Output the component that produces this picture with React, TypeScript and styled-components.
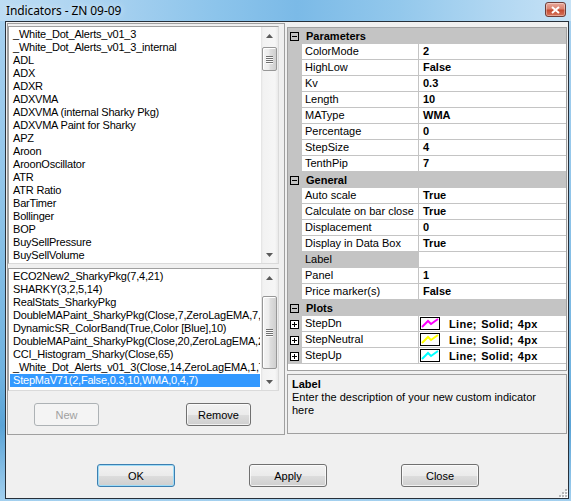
import * as React from 'react';
import styled, {createGlobalStyle} from 'styled-components';

const GlobalStyle = createGlobalStyle`
  html, body {
    margin: 0;
    padding: 0;
    background: #fff;
  }
  body {
    font-family: 'Liberation Sans', Arial, sans-serif;
    font-size: 11px;
    color: #000;
  }
  * {
    box-sizing: border-box;
  }
`;

const indicators = [
  '_White_Dot_Alerts_v01_3',
  '_White_Dot_Alerts_v01_3_internal',
  'ADL',
  'ADX',
  'ADXR',
  'ADXVMA',
  'ADXVMA (internal Sharky Pkg)',
  'ADXVMA Paint for Sharky',
  'APZ',
  'Aroon',
  'AroonOscillator',
  'ATR',
  'ATR Ratio',
  'BarTimer',
  'Bollinger',
  'BOP',
  'BuySellPressure',
  'BuySellVolume',
  'CCI',
  'ChaikinMoneyFlow',
];

const applied = [
  'ECO2New2_SharkyPkg(7,4,21)',
  'SHARKY(3,2,5,14)',
  'RealStats_SharkyPkg',
  'DoubleMAPaint_SharkyPkg(Close,7,ZeroLagEMA,7,ZeroLagEMA,21)',
  'DynamicSR_ColorBand(True,Color [Blue],10)',
  'DoubleMAPaint_SharkyPkg(Close,20,ZeroLagEMA,20,ZeroLagEMA,50)',
  'CCI_Histogram_Sharky(Close,65)',
  '_White_Dot_Alerts_v01_3(Close,14,ZeroLagEMA,1,True)',
  'StepMaV71(2,False,0.3,10,WMA,0,4,7)',
];

type Prop = {name: string; value: string; selected?: boolean};

const parameters: Prop[] = [
  {name: 'ColorMode', value: '2'},
  {name: 'HighLow', value: 'False'},
  {name: 'Kv', value: '0.3'},
  {name: 'Length', value: '10'},
  {name: 'MAType', value: 'WMA'},
  {name: 'Percentage', value: '0'},
  {name: 'StepSize', value: '4'},
  {name: 'TenthPip', value: '7'},
];

const general: Prop[] = [
  {name: 'Auto scale', value: 'True'},
  {name: 'Calculate on bar close', value: 'True'},
  {name: 'Displacement', value: '0'},
  {name: 'Display in Data Box', value: 'True'},
  {name: 'Label', value: '', selected: true},
  {name: 'Panel', value: '1'},
  {name: 'Price marker(s)', value: 'False'},
];

const plots = [
  {name: 'StepDn', color: '#ff00ff'},
  {name: 'StepNeutral', color: '#ffff00'},
  {name: 'StepUp', color: '#00ffff'},
];

const App = () => {
  return (
    <>
      <GlobalStyle />
      <Window>
        <TitleBar>
          <Title>Indicators - ZN 09-09</Title>
          <CloseButton>
            <svg width="9" height="8" viewBox="0 0 9 8">
              <path d="M1 1 L8 7 M8 1 L1 7" stroke="#fff" strokeWidth="2" />
            </svg>
          </CloseButton>
        </TitleBar>
        <Client>
          <Main>
            <LeftPanel>
              <ListBox height={238}>
                <ListItems>
                  {indicators.map((item) => (
                    <ListRow key={item}>{item}</ListRow>
                  ))}
                </ListItems>
                <ScrollBar thumbOffset={3} thumbHeight={24} />
              </ListBox>
              <ListBox height={123} gap={4}>
                <ListItems>
                  {applied.map((item, i) => (
                    <ListRow key={item} selected={i === applied.length - 1}>
                      {item}
                    </ListRow>
                  ))}
                </ListItems>
                <ScrollBar thumbOffset={10} thumbHeight={73} />
              </ListBox>
              <PanelButtons>
                <Button width={65} disabled>
                  New
                </Button>
                <Button width={65}>Remove</Button>
              </PanelButtons>
            </LeftPanel>
            <RightPanel>
              <Grid>
                <Category title="Parameters" />
                {parameters.map((p) => (
                  <PropRow key={p.name} {...p} />
                ))}
                <Category title="General" />
                {general.map((p) => (
                  <PropRow key={p.name} {...p} />
                ))}
                <Category title="Plots" />
                {plots.map((p) => (
                  <Row key={p.name}>
                    <Gutter>
                      <Expander open={false} filled />
                    </Gutter>
                    <NameCell>{p.name}</NameCell>
                    <ValueCell>
                      <PlotSwatch color={p.color} />
                      <PlotText>Line; Solid; 4px</PlotText>
                    </ValueCell>
                  </Row>
                ))}
                <GridFiller />
              </Grid>
              <Description>
                <DescTitle>Label</DescTitle>
                <DescText>Enter the description of your new custom indicator here</DescText>
              </Description>
            </RightPanel>
          </Main>
          <DialogButtons>
            <Button width={78} primary>
              OK
            </Button>
            <Button width={78}>Apply</Button>
            <Button width={78}>Close</Button>
          </DialogButtons>
          <SizeGrip>
            <svg width="10" height="10" viewBox="0 0 10 10">
              {[
                [7, 1],
                [7, 4],
                [4, 4],
                [7, 7],
                [4, 7],
                [1, 7],
              ].map(([x, y]) => (
                <React.Fragment key={`${x}-${y}`}>
                  <rect x={x + 1} y={y + 1} width="2" height="2" fill="#fff" />
                  <rect x={x} y={y} width="2" height="2" fill="#b8b8b8" />
                </React.Fragment>
              ))}
            </svg>
          </SizeGrip>
        </Client>
      </Window>
    </>
  );
};

const ScrollBar = ({thumbOffset, thumbHeight}: {thumbOffset: number; thumbHeight: number}) => (
  <Scroll>
    <ScrollArrow>
      <svg width="7" height="4" viewBox="0 0 7 4">
        <polygon points="0,4 3.5,0 7,4" fill="#5a5a5a" />
      </svg>
    </ScrollArrow>
    <ScrollTrack>
      <Thumb offset={thumbOffset} size={thumbHeight}>
        <Grip />
        <Grip />
        <Grip />
        <Grip />
      </Thumb>
    </ScrollTrack>
    <ScrollArrow>
      <svg width="7" height="4" viewBox="0 0 7 4">
        <polygon points="0,0 7,0 3.5,4" fill="#5a5a5a" />
      </svg>
    </ScrollArrow>
  </Scroll>
);

const Expander = ({open, filled}: {open: boolean; filled?: boolean}) => (
  <svg width="9" height="9" viewBox="0 0 9 9">
    <rect x="0.5" y="0.5" width="8" height="8" fill={filled ? '#fff' : 'none'} stroke="#000" />
    <line x1="2" y1="4.5" x2="7" y2="4.5" stroke="#000" />
    {!open && <line x1="4.5" y1="2" x2="4.5" y2="7" stroke="#000" />}
  </svg>
);

const Category = ({title}: {title: string}) => (
  <CategoryRow>
    <CategoryGutter>
      <Expander open />
    </CategoryGutter>
    {title}
  </CategoryRow>
);

const PropRow = ({name, value, selected}: Prop) => (
  <Row>
    <Gutter />
    <NameCell selected={selected}>{name}</NameCell>
    <ValueCell>
      <Value>{value}</Value>
    </ValueCell>
  </Row>
);

const PlotSwatch = ({color}: {color: string}) => (
  <svg width="20" height="13" viewBox="0 0 20 13">
    <rect x="0.5" y="0.5" width="19" height="12" fill="#fff" stroke="#000" />
    <polyline points="2,10 8,4 11,7 18,2" fill="none" stroke={color} strokeWidth="2" />
  </svg>
);

const Window = styled.div`
  width: 571px;
  height: 501px;
  display: flex;
  flex-direction: column;
  overflow: hidden;
  background: linear-gradient(180deg, #a8d1ef 0%, #93c6ea 35%, #6fb2df 75%, #5aa3d6 85%, #a3d0ef 100%);
`;

const TitleBar = styled.div`
  flex: none;
  height: 21px;
  display: flex;
  align-items: center;
  padding: 0 5px 0 6px;
  background: linear-gradient(
    90deg,
    #bddcf3 0%,
    #a9d2f0 18%,
    #8cc4eb 38%,
    #7bbae7 52%,
    #93c8ec 70%,
    #b3d8f2 88%,
    #c6e2f6 100%
  );
`;

const Title = styled.span`
  font-family: 'Noto Sans', 'Open Sans', sans-serif;
  font-size: 12px;
  color: #000;
  letter-spacing: -0.1px;
  text-shadow: 0 0 6px rgba(255, 255, 255, 0.8);
`;

const CloseButton = styled.div`
  margin-left: auto;
  width: 21px;
  height: 15px;
  margin-top: -2px;
  display: flex;
  align-items: center;
  justify-content: center;
  border: 1px solid #6d3d38;
  border-radius: 3px;
  background: linear-gradient(180deg, #e9a99c 0%, #d9826f 45%, #c44a31 55%, #d6745b 100%);
  box-shadow: inset 0 0 0 1px rgba(255, 255, 255, 0.35);
`;

const Client = styled.div`
  position: relative;
  flex: none;
  height: 478px;
  margin: 0 2px 0 5px;
  border: 1px solid #27303a;
  background: #f0f0f0;
  display: flex;
  flex-direction: column;
`;

const Main = styled.div`
  flex: none;
  height: 413px;
  display: flex;
  gap: 2px;
  padding: 1px 0 0 1px;
`;

const LeftPanel = styled.div`
  width: 278px;
  height: 412px;
  border: 1px solid #a0a0a0;
  display: flex;
  flex-direction: column;
  padding-top: 2px;
`;

const ListBox = styled.div<{height: number; gap?: number}>`
  flex: none;
  width: 271px;
  height: ${(p) => p.height}px;
  margin-top: ${(p) => p.gap || 0}px;
  border: 1px solid #a0a0a0;
  border-right-color: #dadada;
  border-bottom-color: #dadada;
  background: #fff;
  display: flex;
`;

const ListItems = styled.div`
  flex: 1;
  min-width: 0;
  padding: 1px 1px 0 1px;
  overflow: hidden;
`;

const ListRow = styled.div<{selected?: boolean}>`
  height: 13px;
  line-height: 13px;
  padding-left: 3px;
  white-space: nowrap;
  overflow: hidden;
  letter-spacing: -0.2px;
  background: ${(p) => (p.selected ? '#3399ff' : 'transparent')};
  color: ${(p) => (p.selected ? '#fff' : '#000')};
`;

const Scroll = styled.div`
  flex: none;
  width: 17px;
  display: flex;
  flex-direction: column;
  background: linear-gradient(90deg, #e2e2e2 0, #f2f2f2 2px, #f6f6f6 14px, #e9e9e9 100%);
`;

const ScrollArrow = styled.div`
  flex: none;
  height: 17px;
  display: flex;
  align-items: center;
  justify-content: center;
`;

const ScrollTrack = styled.div`
  flex: 1;
  display: flex;
  flex-direction: column;
  align-items: center;
`;

const Thumb = styled.div<{offset: number; size: number}>`
  width: 15px;
  margin-top: ${(p) => p.offset}px;
  height: ${(p) => p.size}px;
  border: 1px solid #979797;
  border-radius: 2px;
  background: linear-gradient(90deg, #f4f4f4 0%, #ececec 45%, #dedede 55%, #cfcfcf 100%);
  box-shadow: inset 1px 1px 0 #fff;
  display: flex;
  flex-direction: column;
  align-items: center;
  justify-content: center;
  gap: 1px;
`;

const Grip = styled.div`
  width: 7px;
  height: 1px;
  background: #707070;
  box-shadow: 0 1px 0 #fafafa;
`;

const PanelButtons = styled.div`
  display: flex;
  gap: 87px;
  margin-top: 12px;
  padding-left: 26px;
`;

const Button = styled.button<{width: number; primary?: boolean}>`
  width: ${(p) => p.width}px;
  height: 23px;
  padding: 0;
  font-family: 'Liberation Sans', Arial, sans-serif;
  font-size: 11px;
  color: #000;
  border: 1px solid ${(p) => (p.primary ? '#3c7fb1' : '#707070')};
  border-radius: 3px;
  background: linear-gradient(180deg, #f2f2f2 0%, #ebebeb 50%, #dddddd 51%, #cfcfcf 100%);
  box-shadow: inset 0 0 0 1px ${(p) => (p.primary ? '#9fdcf7' : 'rgba(255, 255, 255, 0.7)')};

  &:disabled {
    color: #a0a0a0;
    border-color: #adb2b5;
    background: #f4f4f4;
    box-shadow: none;
  }
`;

const RightPanel = styled.div`
  width: 280px;
  display: flex;
  flex-direction: column;
  gap: 3px;
  padding-top: 4px;
`;

const Grid = styled.div`
  flex: none;
  height: 344px;
  border: 1px solid #a0a0a0;
  background: #fff;
  display: flex;
  flex-direction: column;
`;

const CategoryRow = styled.div`
  flex: none;
  height: 16px;
  display: flex;
  align-items: center;
  background: #c4c4c4;
  font-weight: bold;
`;

const CategoryGutter = styled.div`
  width: 18px;
  padding-left: 2px;
  display: flex;
  align-items: center;
`;

const Row = styled.div`
  flex: none;
  height: 16px;
  display: flex;
`;

const Gutter = styled.div`
  flex: none;
  width: 14px;
  padding-left: 2px;
  background: #c4c4c4;
  display: flex;
  align-items: center;
`;

const NameCell = styled.div<{selected?: boolean}>`
  flex: none;
  width: 117px;
  padding-left: 3px;
  line-height: 15px;
  white-space: nowrap;
  overflow: hidden;
  border-right: 1px solid #c4c4c4;
  border-bottom: 1px solid #c4c4c4;
  background: ${(p) => (p.selected ? '#c4c4c4' : '#fff')};
`;

const ValueCell = styled.div`
  flex: 1;
  display: flex;
  align-items: center;
  gap: 9px;
  padding-left: 1px;
  border-bottom: 1px solid #c4c4c4;
`;

const Value = styled.span`
  padding-left: 3px;
  font-weight: bold;
  line-height: 15px;
`;

const PlotText = styled.span`
  font-weight: bold;
  letter-spacing: 0.3px;
  word-spacing: 1px;
`;

const GridFiller = styled.div`
  flex: 1;
`;

const Description = styled.div`
  flex: none;
  height: 60px;
  border: 1px solid #a0a0a0;
  padding: 3px 4px 0 4px;
  line-height: 13px;
`;

const DescTitle = styled.div`
  font-weight: bold;
`;

const DescText = styled.div`
  max-width: 262px;
`;

const DialogButtons = styled.div`
  display: flex;
  gap: 74px;
  padding: 29px 0 0 91px;
`;

const SizeGrip = styled.div`
  position: absolute;
  right: 0;
  bottom: 0;
  width: 10px;
  height: 10px;
  display: flex;
`;

export default App;
